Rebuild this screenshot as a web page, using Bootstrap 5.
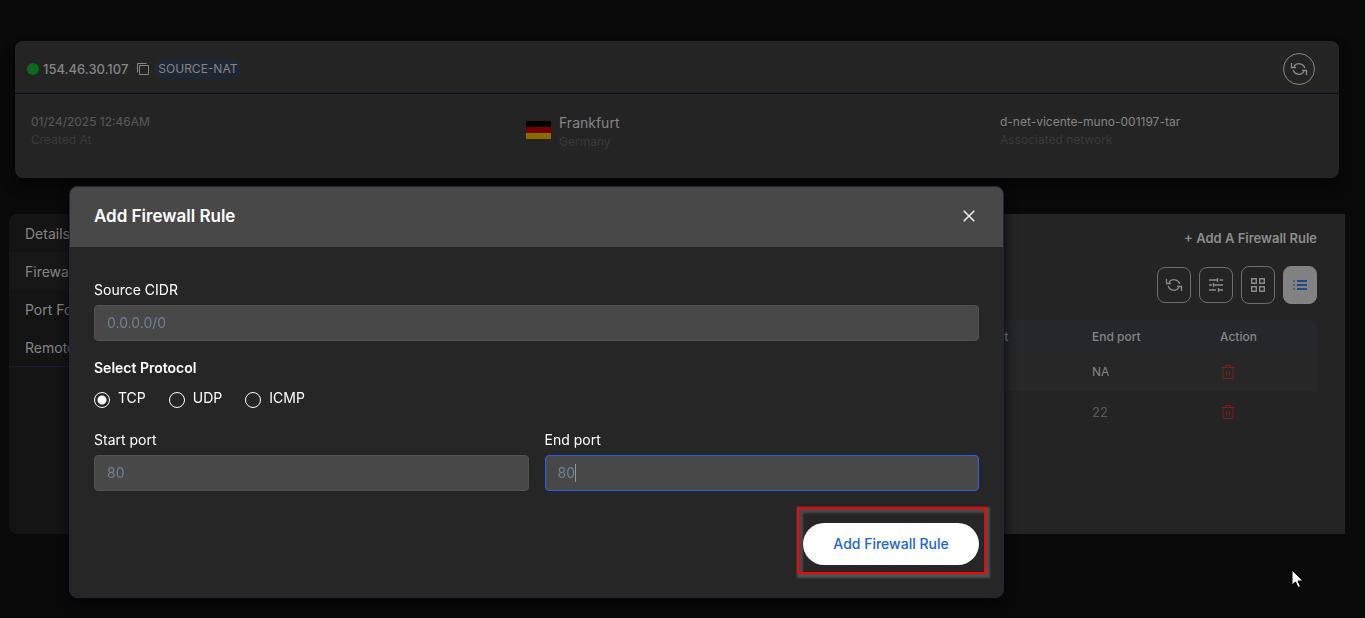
<!DOCTYPE html>
<html lang="en">
<head>
<meta charset="utf-8">
<meta name="viewport" content="width=device-width, initial-scale=1">
<title>Firewall rules</title>
<link rel="stylesheet" href="https://cdn.jsdelivr.net/npm/bootstrap@5.3.0/dist/css/bootstrap.min.css">
<style>
:root{--page:#090909;--panel:#242424;--text:#858585;--dim:#3a3a3a;--field:#484848;--navy:#20253a}
body{background:var(--page);color:var(--text);font:400 13px/18px Inter,"Open Sans",sans-serif;min-height:100vh;overflow:hidden}
svg{display:block;fill:none;stroke:currentColor}
.page{padding:41px 20px 0 9px}
.ip-card{background:var(--panel);border-radius:8px;margin:0 6px 36px;box-shadow:0 8px 12px #060606}
.ip-head{border-bottom:1px solid #0b0a18;padding:12px 24px 8px 12px}
.dot{width:12px;height:12px;border-radius:50%;background:#0a6b1d}
.ip-addr{font-size:13px;line-height:20px;font-weight:500}
.tag-nat{background:#1e2835;border-radius:10px;padding:1px 4px;font-size:12px;line-height:18px}
.round-btn{width:32px;height:32px;border:1px solid #858585;border-radius:50%;background:none;color:#8c8c8c;padding:0}
.facts{display:grid;grid-template-columns:495fr 474fr 323fr;padding:19px 16px 27px;min-height:84px;font-size:12px}
.facts .dimmed{color:var(--dim)}
.facts .date{color:#5a5a5a}
.city{font-size:14px;line-height:20px}
.flag{width:25px;height:18px;background:linear-gradient(#000 0 33%,#740000 33% 67%,#8a6d00 67%)}
.side{flex:0 0 220px;background:#141414;border-radius:8px 0 0 8px;font-size:14px}
.side a{display:block;padding:11px 16px 9px;color:var(--text);text-decoration:none}
.side a.current{background:#171717}
.side nav{border-bottom:1px solid #1b1b33}
.rules{background:var(--panel);padding:14px 28px 100px 16px;min-height:320px}
.rules .add{color:#8c8c8c;font-size:13px;line-height:20px;font-weight:600;text-decoration:none}
.tools{margin:18px 0 16px}
.tool{width:34px;height:36px;border:1px solid #6d6d6d;border-radius:8px;background:none;color:#8a8a8a;padding:0}
.tool.tall{height:38px}
.tool.on{background:#828282;border-color:#828282;color:#204a86}
.grid-table{width:100%;table-layout:fixed;font-size:12px;border-collapse:separate;border-spacing:0}
.grid-table th{background:#25272d;height:31px;font-weight:500;padding:2px 0 0}
.grid-table th:first-child{border-radius:8px 0 0 0;padding-left:16px}
.grid-table th:last-child{border-radius:0 8px 0 0}
.grid-table td{height:40px;padding:2px 0 0}
.grid-table td:first-child{padding-left:16px}
.grid-table tbody tr:first-child td{background:#272727}
.grid-table tbody tr:last-child td{color:#5a5a5a;font-size:13px}
.trash{display:block;border:0;background:none;color:#7c1c1c;padding:0}
.overlay{position:fixed;inset:0;padding:186px 361px 0 69px;overflow:hidden}
.overlay .modal-dialog{max-width:none;margin:0}
.overlay .modal-content{background:#262626;border:1px solid var(--navy);border-radius:8px;color:#fff;box-shadow:0 6px 12px #060606}
.overlay .modal-header{background:var(--field);border:0;padding:17px 24px 19px;border-radius:7px 7px 0 0}
.overlay .modal-title{font-size:17px;line-height:24px;font-weight:600}
.overlay .modal-body{padding:32px 24px;font-size:14px;line-height:22px;font-weight:400}
.shut{border:0;background:none;color:#eee;padding:0;margin-right:4px}
.overlay label,.overlay legend{display:block;font-size:14px;line-height:22px;margin:0;float:none}
.overlay legend{font-size:14px;font-weight:600}
.field{width:100%;height:36px;margin-top:4px;background:var(--field);border:1px solid #525252;border-radius:4px;color:#718096;padding:0 12px 1px;font-size:14px;line-height:20px;outline:0}
.field.active{border-color:#2563eb;background:linear-gradient(#8a94a3,#8a94a3) 29px 50%/1px 18px no-repeat var(--field);caret-color:transparent}
.field::placeholder{color:#718096;opacity:1}
.options{margin:8px 0 20px;column-gap:23px}
.options input{appearance:none;width:16px;height:16px;border:1px solid #fff;border-radius:50%;margin:5px 8px 0 0}
.options input:checked{background:radial-gradient(circle,#fff 0 4px,transparent 5px)}
.submit{width:176px;height:42px;border:0;border-radius:21px;background:#fff;color:#1a62d8;font-size:14px;font-weight:500;padding:0}
.callout-wrap{position:relative}
.callout-wrap::after{content:"";position:absolute;inset:-16px -7px -9px -6px;border:2px solid #f00;pointer-events:none;box-shadow:2px 2px 2px 2px #505050,inset 3px 3px 2px 1px #484848}
.submit{position:relative;z-index:1}
.pointer{position:fixed;left:1291px;top:569px;z-index:1100}
</style>
</head>
<body>
<div class="page">
  <section class="ip-card">
    <header class="ip-head d-flex align-items-center justify-content-between">
      <div class="d-flex align-items-center">
        <span class="dot me-1"></span><span class="ip-addr">154.46.30.107</span>
        <svg class="ms-2 me-1" width="14" height="14" viewBox="0 0 14 14"><path d="M3.500 3.500h9v9h-9zM1.500 10.500v-9h9"/></svg>
        <span class="tag-nat">SOURCE-NAT</span>
      </div>
      <button class="round-btn d-flex align-items-center justify-content-center" aria-label="Refresh"><svg width="18" height="18" viewBox="0 0 18 18" stroke-width="1.300"><path d="M1.500 3v4.500H6M2 7.500h3M4 6.500A6 6 0 0 1 14.800 8M16.500 15v-4.500H12M14 11.500A6 6 0 0 1 3.200 10"/></svg></button>
    </header>
    <div class="facts">
      <div><div class="date">01/24/2025 12:46AM</div><div class="dimmed">Created At</div></div>
      <div class="d-flex gap-2"><span class="flag mt-2"></span><div><div class="city">Frankfurt</div><div class="dimmed">Germany</div></div></div>
      <div><div>d-net-vicente-muno-001197-tar</div><div class="dimmed">Associated network</div></div>
    </div>
  </section>
  <div class="d-flex">
    <aside class="side"><nav>
      <a href="#">Details</a><a href="#" class="current">Firewall</a><a href="#">Port Forwarding</a><a href="#">Remote Access</a>
    </nav></aside>
    <main class="rules flex-grow-1">
      <div class="text-end"><a href="#" class="add">+ Add A Firewall Rule</a></div>
      <div class="tools d-flex justify-content-end align-items-center gap-2">
        <button class="tool d-flex align-items-center justify-content-center" aria-label="Refresh"><svg width="18" height="18" viewBox="0 0 18 18" stroke-width="1.300"><path d="M1.500 3v4.500H6M2 7.500h3M4 6.500A6 6 0 0 1 14.800 8M16.500 15v-4.500H12M14 11.500A6 6 0 0 1 3.200 10"/></svg></button>
        <button class="tool d-flex align-items-center justify-content-center" aria-label="Filter"><svg width="16" height="16" viewBox="0 0 16 16" stroke-width="1.300"><path d="M1 3h8M9.500 1v4M11.500 3H15M1 8h3M5.500 6v4M6 8h9M1 13h7M10.500 11v4M10.500 13H15"/></svg></button>
        <button class="tool tall d-flex align-items-center justify-content-center" aria-label="Grid view"><svg width="16" height="16" viewBox="0 0 16 16" stroke-width="1.400"><path d="M1.700 1.700h4.600v4.600H1.700zM9.700 1.700h4.600v4.600H9.700zM1.700 9.700h4.600v4.600H1.700zM9.700 9.700h4.600v4.600H9.700z"/></svg></button>
        <button class="tool tall on d-flex align-items-center justify-content-center" aria-label="List view"><svg width="16" height="16" viewBox="0 0 16 16" stroke-width="2"><path d="M5 4h10M5 8h10M5 12h10"/><path d="M1 4h2M1 8h2M1 12h2" opacity=".6"/></svg></button>
      </div>
      <table class="grid-table">
        <colgroup><col><col><col style="width:138px"><col style="width:128px"><col style="width:97px"></colgroup>
        <thead><tr><th>CIDR</th><th>Protocol</th><th>Start port</th><th>End port</th><th>Action</th></tr></thead>
        <tbody>
          <tr><td></td><td></td><td></td><td>NA</td><td><button class="trash" aria-label="Delete"><svg width="16" height="16" viewBox="0 0 16 16"><path d="M1.500 3.500h13M5.500 3V1.500h5V3M3 4v10.500h10V4M6.500 7v4.500M9.500 7v4.500"/></svg></button></td></tr>
          <tr><td></td><td></td><td></td><td>22</td><td><button class="trash" aria-label="Delete"><svg width="16" height="16" viewBox="0 0 16 16"><path d="M1.500 3.500h13M5.500 3V1.500h5V3M3 4v10.500h10V4M6.500 7v4.500M9.500 7v4.500"/></svg></button></td></tr>
        </tbody>
      </table>
    </main>
  </div>
</div>

<div class="modal overlay d-block" role="dialog" aria-labelledby="dlg-title">
  <div class="modal-dialog">
    <form class="modal-content">
      <div class="modal-header">
        <h1 class="modal-title" id="dlg-title">Add Firewall Rule</h1>
        <button type="button" class="shut" aria-label="Close"><svg width="12" height="12" viewBox="0 0 12 12" stroke-width="1.500"><path d="M.7.7l10.600 10.600M11.300.7L.7 11.300"/></svg></button>
      </div>
      <div class="modal-body">
        <div class="mb-3"><label for="cidr">Source CIDR</label><input class="field" id="cidr" placeholder="0.0.0.0/0"></div>
        <fieldset>
          <legend>Select Protocol</legend>
          <div class="options d-flex">
            <div class="d-flex"><input type="radio" name="proto" id="tcp" checked><label for="tcp">TCP</label></div>
            <div class="d-flex"><input type="radio" name="proto" id="udp"><label for="udp">UDP</label></div>
            <div class="d-flex"><input type="radio" name="proto" id="icmp"><label for="icmp">ICMP</label></div>
          </div>
        </fieldset>
        <div class="row gx-3">
          <div class="col-6"><label for="from">Start port</label><input class="field" id="from" value="80"></div>
          <div class="col-6"><label for="to">End port</label><input class="field active" id="to" value="80" autofocus></div>
        </div>
        <div class="d-flex justify-content-end mt-4 pt-2"><div class="callout-wrap"><button type="button" class="submit d-block">Add Firewall Rule</button></div></div>
      </div>
    </form>
  </div>
</div>
<svg class="pointer" width="14" height="20" viewBox="0 0 14 20"><path d="M1 1v15l3.500-3 2.500 5.500 2.500-1L7 12h5z" fill="#fff" stroke="#000"/></svg>
<script src="https://cdn.jsdelivr.net/npm/bootstrap@5.3.0/dist/js/bootstrap.bundle.min.js"></script>
</body>
</html>
